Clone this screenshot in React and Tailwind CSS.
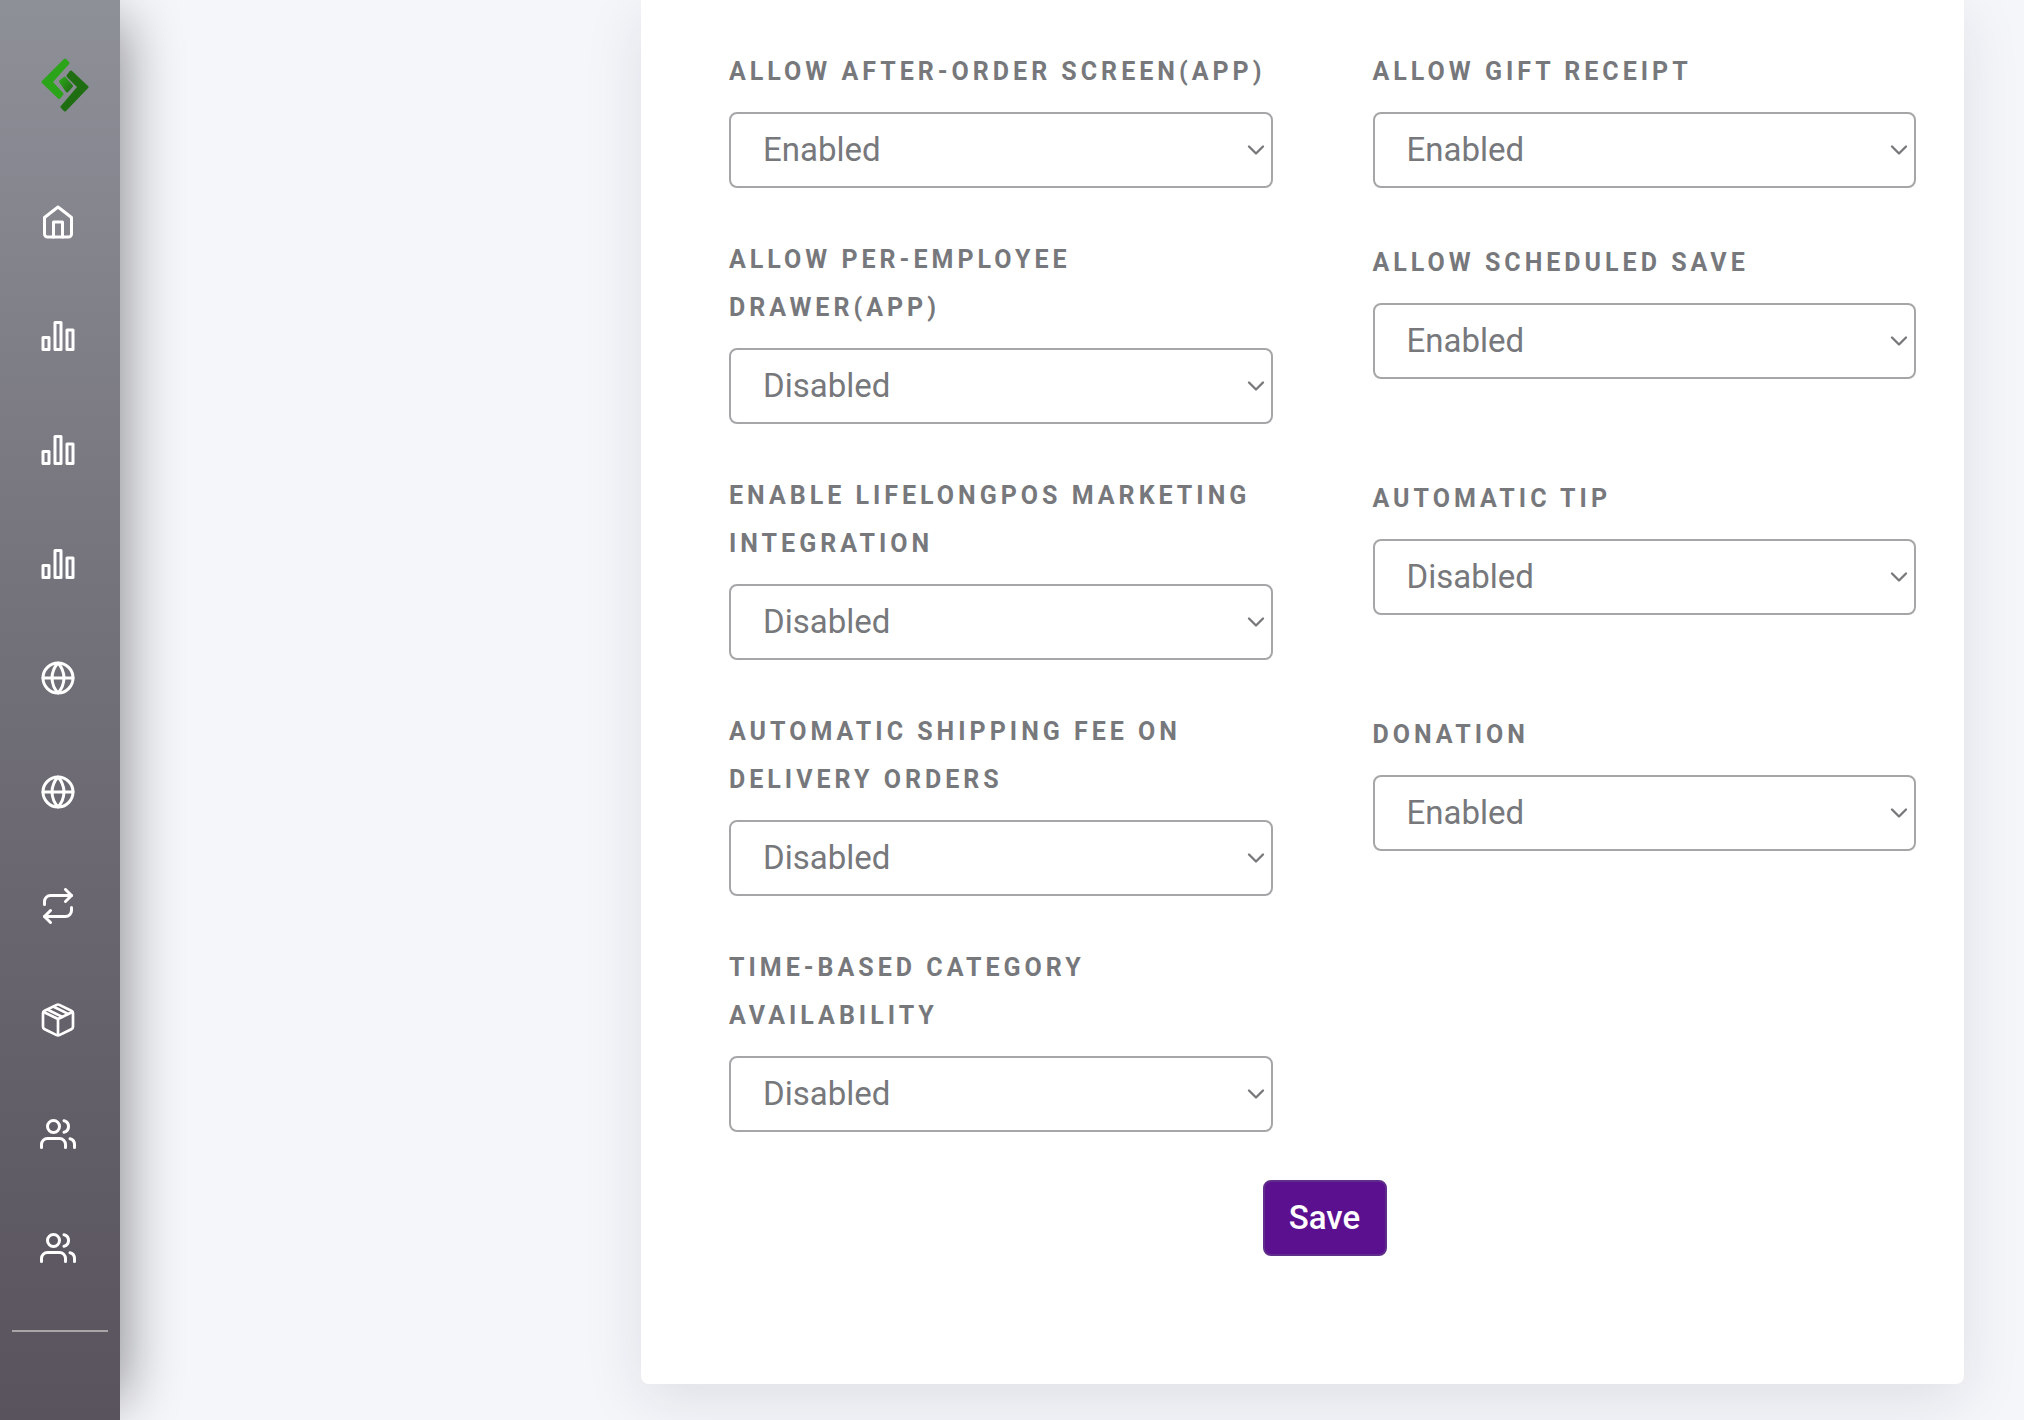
import { FiHome, FiGlobe, FiRepeat, FiUsers, FiChevronDown } from 'react-icons/fi'

const iconProps = {
  viewBox: '0 0 24 24',
  fill: 'none',
  stroke: 'currentColor',
  strokeWidth: 2,
  strokeLinecap: 'round',
  strokeLinejoin: 'round'
}

function BarsIcon({ className }) {
  return (
    <svg {...iconProps} className={className}>
      <path d="M2 13h4v8H2z" />
      <path d="M10 3h4v18h-4z" />
      <path d="M18 8h4v13h-4z" />
    </svg>
  )
}

function BoxIcon({ className }) {
  return (
    <svg {...iconProps} strokeWidth={1.8} className={className}>
      <path d="M11.100 1.900a2 2 0 0 1 1.800 0l8 3.900A2 2 0 0 1 22 7.600v8.800a2 2 0 0 1-1.100 1.800l-8 3.900a2 2 0 0 1-1.800 0l-8-3.900A2 2 0 0 1 2 16.400V7.600a2 2 0 0 1 1.100-1.800z" />
      <path d="M2.400 6.700L12 11.300 21.600 6.700M12 22V11.300" />
      <path d="M5.200 5.200l9.700 4.700M9.100 3.200l9.700 4.700" />
    </svg>
  )
}

function Logo() {
  return (
    <svg viewBox="0 0 48 54" className="w-12" strokeWidth="3" strokeLinejoin="round">
      <defs>
        <linearGradient id="core" x1="0" y1="0" x2="1" y2="1">
          <stop offset="0" stopColor="#2ba41a" />
          <stop offset="1" stopColor="#1f6e12" />
        </linearGradient>
      </defs>
      <path d="M24 2l3 3L10 24l11 12-3 3.500L2 24z" fill="#2ba41a" stroke="#2ba41a" />
      <path d="M30 14l16 15-22 23-3-3 17-20-11-11z" fill="#1f6e12" stroke="#1f6e12" />
      <path d="M19.500 23.500l4-3.200 7 7.700-4.500 5z" fill="url(#core)" stroke="url(#core)" />
    </svg>
  )
}

const navItems = [
  { label: 'Home', Icon: FiHome },
  { label: 'Sales', Icon: BarsIcon },
  { label: 'Reports', Icon: BarsIcon },
  { label: 'Statistics', Icon: BarsIcon },
  { label: 'Online', Icon: FiGlobe },
  { label: 'Website', Icon: FiGlobe },
  { label: 'Orders', Icon: FiRepeat },
  { label: 'Products', Icon: BoxIcon },
  { label: 'Customers', Icon: FiUsers },
  { label: 'Employees', Icon: FiUsers }
]

// two fields per row, left to right
const fields = [
  { id: 'after-order', label: 'Allow After-Order Screen(App)', value: 'Enabled' },
  { id: 'gift-receipt', label: 'Allow Gift Receipt', value: 'Enabled' },
  { id: 'employee-drawer', label: 'Allow Per-Employee Drawer(App)', value: 'Disabled' },
  { id: 'scheduled-save', label: 'Allow Scheduled Save', value: 'Enabled' },
  { id: 'marketing', label: 'Enable LifelongPOS Marketing Integration', value: 'Disabled' },
  { id: 'tip', label: 'Automatic Tip', value: 'Disabled' },
  { id: 'shipping-fee', label: 'Automatic Shipping Fee On Delivery Orders', value: 'Disabled' },
  { id: 'donation', label: 'Donation', value: 'Enabled' },
  { id: 'category-time', label: 'Time-Based Category Availability', value: 'Disabled' }
]

function Sidebar() {
  return (
    <aside className="z-10 w-[120px] shrink-0 bg-linear-to-b from-[#8e9098] via-[#6f6d76] to-[#58535d] shadow-[24px_0_56px_-20px_rgba(0,0,0,0.45)]">
      <a href="#" aria-label="Dashboard" className="flex justify-center pt-[58px] pl-2.5">
        <Logo />
      </a>
      <nav className="mt-[92px] flex flex-col items-center gap-[78px] pr-1 text-white">
        {navItems.map(({ label, Icon }) => (
          <a key={label} href="#" aria-label={label}>
            <Icon className="size-9" />
          </a>
        ))}
      </nav>
      <hr className="mx-3 mt-16 border-t-2 border-[#a8a5a6]" />
    </aside>
  )
}

function SelectField({ id, label, value }) {
  return (
    <div>
      <div className="mb-4 flex min-h-[51px] items-end">
        <label
          htmlFor={id}
          className="text-[25px] leading-[48px] font-bold tracking-[4px] text-[#77787c] uppercase"
        >
          {label}
        </label>
      </div>
      <div className="relative">
        <select
          id={id}
          defaultValue={value}
          className="h-[76px] w-full appearance-none rounded-lg border-2 border-[#a6a6a8] bg-white px-8 text-[33px] text-[#77787c]"
        >
          <option>Enabled</option>
          <option>Disabled</option>
        </select>
        <FiChevronDown className="pointer-events-none absolute top-6 right-[3px] size-7 text-[#77787c]" />
      </div>
    </div>
  )
}

export default function App() {
  return (
    <div className="flex min-h-screen bg-[#f5f6fa] font-[Roboto,sans-serif]">
      <Sidebar />
      <main className="flex-1 pr-[60px] pb-9 pl-[521px]">
        <form className="rounded-b-lg bg-white pt-[45px] pr-12 pb-32 pl-[88px] shadow-[0_16px_60px_rgba(30,30,50,0.1)]">
          <div className="grid grid-cols-2 gap-x-[100px] gap-y-12">
            {fields.map((field) => (
              <SelectField key={field.id} {...field} />
            ))}
          </div>
          <div className="mt-12 flex justify-center pl-1">
            <button
              type="button"
              className="h-[76px] w-[124px] rounded-lg border-2 border-[#5f2d8c] bg-[#5b108f] text-[33px] font-medium text-white"
            >
              Save
            </button>
          </div>
        </form>
      </main>
    </div>
  )
}
